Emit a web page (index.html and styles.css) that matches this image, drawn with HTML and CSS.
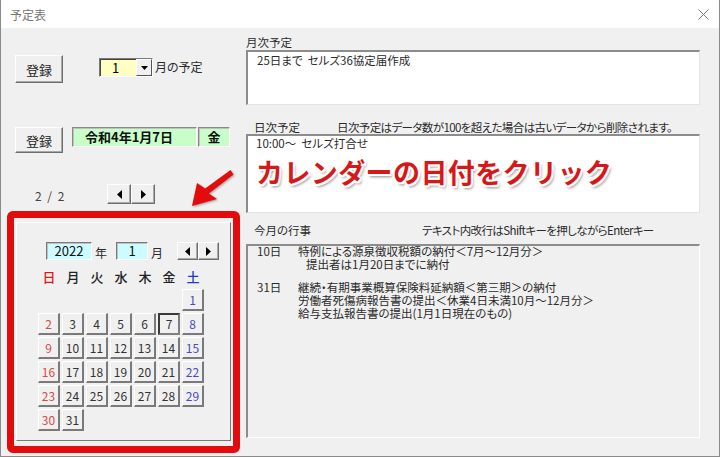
FILE: index.html
```html
<!DOCTYPE html>
<html lang="ja">
<head>
<meta charset="UTF-8">
<title>予定表</title>
<link rel="stylesheet" href="styles.css">
</head>
<body>
<div class="window">
  <div class="titlebar">
    <span class="title">予定表</span>
    <svg class="close" width="11" height="11" viewBox="0 0 11 11"><path d="M0.5 0.5 L10.5 10.5 M10.5 0.5 L0.5 10.5" stroke="#777" stroke-width="1" fill="none"/></svg>
  </div>
  <div class="main">
    <div class="left">
      <div class="row row-month">
        <button class="btn">登録</button>
        <div class="combo">
          <span class="combo-value">1</span>
          <span class="combo-drop"><svg width="7" height="4" viewBox="0 0 7 4"><path d="M0 0 H7 L3.5 4 Z" fill="#000"/></svg></span>
        </div>
        <span class="combo-label">月の予定</span>
      </div>
      <div class="row row-day">
        <button class="btn btn-day">登録</button>
        <div class="date-field">令和4年1月7日</div>
        <div class="dow-field">金</div>
      </div>
      <div class="row row-page">
        <span class="page">2 / 2</span>
        <div class="nav nav-page">
          <span class="nav-btn"><svg width="5" height="9" viewBox="0 0 5 9"><path d="M5 0 V9 L0 4.5 Z" fill="#000"/></svg></span>
          <span class="nav-btn"><svg width="5" height="9" viewBox="0 0 5 9"><path d="M0 0 V9 L5 4.5 Z" fill="#000"/></svg></span>
        </div>
      </div>
      <svg class="arrow" width="55" height="45" viewBox="0 0 55 45">
        <polygon points="7,41 12,18 20.2,23.6 45.5,5 48.5,9.5 23.8,28.4 32,34" fill="#e30b0b"/>
      </svg>
      <div class="cal-mark">
        <div class="cal">
          <div class="cal-head">
            <div class="cal-year">2022</div>
            <span class="cal-unit">年</span>
            <div class="cal-month">1</div>
            <span class="cal-unit">月</span>
            <div class="nav nav-cal">
              <span class="nav-btn"><svg width="5" height="9" viewBox="0 0 5 9"><path d="M5 0 V9 L0 4.5 Z" fill="#000"/></svg></span>
              <span class="nav-btn"><svg width="5" height="9" viewBox="0 0 5 9"><path d="M0 0 V9 L5 4.5 Z" fill="#000"/></svg></span>
            </div>
          </div>
          <div class="cal-week">
            <span class="sun">日</span><span>月</span><span>火</span><span>水</span><span>木</span><span>金</span><span class="sat">土</span>
          </div>
          <div class="cal-grid">
            <span class="blank"></span><span class="blank"></span><span class="blank"></span><span class="blank"></span><span class="blank"></span><span class="blank"></span>
            <span class="day sat">1</span>
            <span class="day sun">2</span><span class="day">3</span><span class="day">4</span><span class="day">5</span><span class="day">6</span><span class="day today">7</span><span class="day sat">8</span>
            <span class="day sun">9</span><span class="day">10</span><span class="day">11</span><span class="day">12</span><span class="day">13</span><span class="day">14</span><span class="day sat">15</span>
            <span class="day sun">16</span><span class="day">17</span><span class="day">18</span><span class="day">19</span><span class="day">20</span><span class="day">21</span><span class="day sat">22</span>
            <span class="day sun">23</span><span class="day">24</span><span class="day">25</span><span class="day">26</span><span class="day">27</span><span class="day">28</span><span class="day sat">29</span>
            <span class="day sun">30</span><span class="day">31</span>
          </div>
        </div>
      </div>
    </div>
    <div class="right">
      <div class="lbl lbl-month">月次予定</div>
      <div class="box box-month"><div class="pre">25日まで  セルズ36協定届作成</div></div>
      <div class="lbl lbl-row"><span class="lbl-name">日次予定</span><span class="lbl-note">日次予定はデータ数が100を超えた場合は古いデータから削除されます。</span></div>
      <div class="box box-day">
        <div class="pre">10:00～  セルズ打合せ</div>
        <div class="hint">カレンダーの日付をクリック</div>
      </div>
      <div class="lbl lbl-row lbl-events"><span class="lbl-name">今月の行事</span><span class="lbl-note">テキスト内改行はShiftキーを押しながらEnterキー</span></div>
      <div class="box box-events">
        <div class="ev">
          <span class="ev-date">10日</span>
          <div class="ev-text">
            <div>特例による源泉徴収税額の納付＜7月～12月分＞</div>
            <div class="ev-sub">提出者は1月20日までに納付</div>
          </div>
        </div>
        <div class="ev ev-gap">
          <span class="ev-date">31日</span>
          <div class="ev-text">
            <div>継続・有期事業概算保険料延納額＜第三期＞の納付</div>
            <div>労働者死傷病報告書の提出＜休業4日未満10月～12月分＞</div>
            <div>給与支払報告書の提出(1月1日現在のもの)</div>
          </div>
        </div>
      </div>
    </div>
  </div>
</div>
</body>
</html>
```

FILE: styles.css
```css
* {
  box-sizing: border-box;
}

body {
  margin: 0;
  background: #fff;
  font-family: "Noto Sans CJK JP", "Noto Sans", sans-serif;
  font-size: 11.5px;
  color: #2a2a2a;
  font-feature-settings: "palt";
}

.window {
  width: 720px;
  height: 457px;
  border: 1px solid #8a8a8a;
  border-top: none;
  background: #f0f0f0;
  display: flex;
  flex-direction: column;
}

.titlebar {
  height: 28px;
  flex: none;
  background: #fff;
  display: flex;
  align-items: center;
  justify-content: space-between;
  padding: 0 10px 0 9px;
}

.title {
  color: #777;
  font-size: 12px;
}

.main {
  flex: 1;
  display: flex;
}

/* left column */
.left {
  width: 245px;
  flex: none;
  position: relative;
  padding: 27px 0 0 6px;
}

.row {
  display: flex;
  align-items: flex-start;
  margin-left: 8px;
}

.btn {
  width: 48px;
  height: 28px;
  padding: 0;
  font-family: inherit;
  font-size: 13px;
  color: #222;
  background: #f0f0f0;
  border: 1px solid;
  border-color: #fff #6e6e6e #6e6e6e #fff;
  box-shadow: inset -1px -1px 0 #a8a8a8;
}

.btn-day {
  height: 26px;
}

.combo {
  display: flex;
  width: 54px;
  height: 19px;
  margin: 3px 0 0 36px;
  border: 1px solid;
  border-color: #7a7a7a #fff #fff #7a7a7a;
  box-shadow: inset 1px 1px 0 #444;
  background: #ffffc4;
}

.combo-value {
  flex: 1;
  padding-left: 12px;
  font-size: 13px;
  line-height: 17px;
  color: #000;
}

.combo-drop {
  width: 16px;
  display: flex;
  align-items: center;
  justify-content: center;
  background: #f0f0f0;
  border: 1px solid;
  border-color: #fff #555 #555 #fff;
}

.combo-label {
  margin: 5px 0 0 2px;
  font-size: 12px;
  line-height: 14px;
}

.row-day {
  margin-top: 44px;
}

.date-field,
.dow-field {
  height: 20px;
  margin-left: 9px;
  background: #c8ffc8;
  border: 1px solid;
  border-color: #8a8a8a #fff #fff #8a8a8a;
  box-shadow: inset 1px 1px 0 #c0c0c0;
  font-size: 13px;
  font-weight: 700;
  line-height: 18px;
  color: #111;
}

.date-field {
  width: 125px;
  padding-left: 12px;
}

.dow-field {
  width: 32px;
  margin-left: 1px;
  text-align: center;
}

.row-page {
  margin: 31px 0 0 28px;
}

.page {
  width: 72px;
  padding-top: 5px;
  font-size: 12px;
  line-height: 14px;
  color: #444;
  word-spacing: 3px;
}

.nav {
  display: flex;
}

.nav-btn {
  display: flex;
  align-items: center;
  justify-content: center;
  background: #f0f0f0;
  border: 1px solid;
  border-color: #fff #6e6e6e #6e6e6e #fff;
  box-shadow: inset -1px -1px 0 #a8a8a8;
}

.nav-page .nav-btn {
  width: 24px;
  height: 20px;
}

.arrow {
  position: absolute;
  left: 184px;
  top: 137px;
  filter: drop-shadow(1px 1px 1px rgba(0, 0, 0, 0.35));
}

.cal-mark {
  width: 233px;
  height: 242px;
  margin-top: 7px;
  border: 7px solid #e30b0b;
  border-radius: 6px;
  padding: 4px 2px 5px 2px;
}

.cal {
  height: 100%;
  border: 1px solid;
  border-color: #fff #7a7a7a #7a7a7a #fff;
  padding: 19px 0 0 21px;
}

.cal-head {
  display: flex;
  align-items: center;
  margin-left: 8px;
  height: 18px;
}

.cal-year,
.cal-month {
  height: 18px;
  background: #ccfcff;
  border: 1px solid;
  border-color: #7a7a7a #fff #fff #7a7a7a;
  box-shadow: inset 1px 1px 0 #c0c0c0;
  text-align: center;
  font-size: 13px;
  line-height: 16px;
  color: #111;
}

.cal-year {
  width: 46px;
}

.cal-month {
  width: 32px;
  margin-left: 9px;
}

.cal-unit {
  margin-left: 3px;
  font-size: 12px;
  line-height: 14px;
  padding-top: 4px;
}

.nav-cal {
  margin-left: 14px;
}

.nav-cal .nav-btn {
  width: 21px;
  height: 18px;
}

.cal-week,
.cal-grid {
  display: grid;
  grid-template-columns: repeat(7, 22px);
  column-gap: 2px;
}

.cal-week {
  margin-top: 10px;
  font-size: 13px;
  font-weight: 500;
  line-height: 14px;
  text-align: center;
  color: #222;
}

.cal-week .sun {
  color: #e01818;
}

.cal-week .sat {
  color: #2438c8;
}

.cal-grid {
  margin-top: 5px;
  grid-auto-rows: 22px;
  row-gap: 2px;
}

.day {
  background: #f0f0f0;
  border: 1px solid;
  border-width: 1px 2px 2px 1px;
  border-color: #fff #7a7a7a #7a7a7a #fff;
  font-size: 12px;
  line-height: 19px;
  text-align: center;
  color: #333;
}

.day.sun {
  color: #d84a4a;
}

.day.sat {
  color: #4a4ac4;
}

.day.today {
  border-width: 2px;
  border-color: #3a3a3a #808080 #808080 #3a3a3a;
  line-height: 18px;
}

/* right column */
.right {
  width: 454px;
  flex: none;
  padding-top: 7px;
  display: flex;
  flex-direction: column;
}

.lbl {
  height: 14px;
  line-height: 14px;
  font-size: 11.5px;
  color: #2a2a2a;
}

.lbl-row {
  display: flex;
  margin-top: 15px;
  padding-left: 8px;
}

.lbl-name {
  width: 83px;
  flex: none;
}

.lbl-note {
  white-space: nowrap;
  letter-spacing: -0.6px;
}

.lbl-events {
  margin-top: 10px;
}

.lbl-events .lbl-name {
  width: 168px;
}

.box {
  background: #fff;
  border-top: 2px solid #8c8c8c;
  border-left: 2px solid #8c8c8c;
  border-right: 1px solid #e4e4e4;
  border-bottom: 1px solid #e4e4e4;
  line-height: 14px;
}

.pre {
  white-space: pre;
}

.box-month {
  height: 55px;
  margin-top: 1px;
  padding: 1px 0 0 9px;
}

.box-day {
  height: 79px;
  padding: 0 0 0 8px;
}

.hint {
  margin-top: 7px;
  font-size: 27px;
  font-weight: 700;
  line-height: 30px;
  letter-spacing: 0.4px;
  color: #d81818;
  font-feature-settings: normal;
  text-shadow: -2px 0 #fff, 2px 0 #fff, 0 -2px #fff, 0 2px #fff,
    -1.5px -1.5px #fff, 1.5px 1.5px #fff, -1.5px 1.5px #fff, 1.5px -1.5px #fff,
    2px 3px 3px rgba(0, 0, 0, 0.45);
}

.box-events {
  height: 194px;
  margin-top: 7px;
  padding: 0 0 0 9px;
  background: #f0f0f0;
  border-right-color: #fff;
  border-bottom-color: #fff;
  line-height: 13px;
}

.ev {
  display: flex;
}

.ev:first-child {
  margin-top: -1px;
}

.ev-gap {
  margin-top: 10px;
}

.ev-date {
  width: 41px;
  flex: none;
}

.ev-sub {
  padding-left: 8px;
}
```
